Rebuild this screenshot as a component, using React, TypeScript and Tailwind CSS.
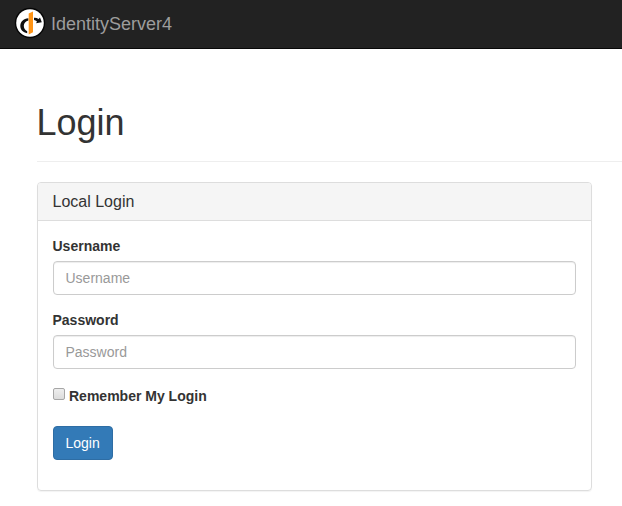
import React from "react";

function Logo() {
  return (
    <svg className="h-8 w-8" viewBox="0 0 32 32" aria-hidden="true">
      <circle cx="16" cy="16" r="15.2" fill="#050505" />
      <circle cx="16" cy="16" r="13.8" fill="#fff" />
      <path d="M14.4 11.2 C9.4 11.6 6.3 14.8 6.3 18.8 C6.3 22.8 9 25.6 13.2 26.2 V24.2 C11 23.2 9.8 21.4 9.8 18.8 C9.8 16 11.6 14 14.4 13.4 Z" fill="#111" />
      <path d="M14.7 6.4 L19 4.4 V25.2 L14.7 27.4 Z" fill="#ff9416" />
      <path d="M20 10.8 C21.6 10.6 23 11 24.6 12 L26 10.4 L27.8 15.2 L22 16.2 L23 14.5 C22 13.6 21 13.2 20 13 Z" fill="#111" />
    </svg>
  );
}

function Field({ id, label, type }: { id: string; label: string; type: string }) {
  return (
    <div className="mb-[15px]">
      <label htmlFor={id} className="mb-[5px] block font-bold">{label}</label>
      <input
        id={id}
        type={type}
        placeholder={label}
        className="block h-[34px] w-full rounded border border-[#ccc] bg-white px-3 py-1.5 text-[14px] leading-5 text-[#555] shadow-[inset_0_1px_1px_rgba(0,0,0,0.075)] outline-none placeholder:text-[#999]"
      />
    </div>
  );
}

export default function App() {
  return (
    <div className="min-h-screen overflow-hidden bg-white font-['Liberation_Sans',Arial,sans-serif] text-[14px] leading-5 text-[#333]">
      <nav className="flex h-[49px] items-start border-b border-[#080808] bg-[#222] pl-[14px] pt-[7px]">
        <Logo />
        <span className="ml-[5px] mt-[7px] text-[18px] leading-5 text-[#9d9d9d]">IdentityServer4</span>
      </nav>
      <main className="pl-[36.5px] pt-[53px]">
        <header className="h-[60px] border-b border-[#eee] pt-px">
          <h1 className="text-[36px] font-medium leading-[40px]">Login</h1>
        </header>
        <section className="mt-5 h-[309px] w-[555px] rounded border border-[#ddd] shadow-[0_1px_1px_rgba(0,0,0,0.05)]">
          <div className="h-[38px] rounded-t-[3px] border-b border-[#ddd] bg-[#f5f5f5] px-[15px] py-[10px]">
            <h3 className="text-[16px] font-medium leading-[17.6px]">Local Login</h3>
          </div>
          <form className="p-[15px]" onSubmit={(e) => e.preventDefault()}>
            <Field id="username" label="Username" type="text" />
            <Field id="password" label="Password" type="password" />
            <label className="mb-5 mt-[17px] flex h-5 items-start font-bold">
              <input
                type="checkbox"
                className="mr-[4.5px] mt-[2px] h-3 w-3 appearance-none rounded-[2px] border border-[#a6a6a6] bg-linear-to-b from-[#eee] to-[#dcdcdc]"
              />
              <span>Remember My Login</span>
            </label>
            <button className="h-[34px] rounded border border-[#2e6da4] bg-[#337ab7] px-3 py-1.5 leading-5 text-white">
              Login
            </button>
          </form>
        </section>
      </main>
    </div>
  );
}
